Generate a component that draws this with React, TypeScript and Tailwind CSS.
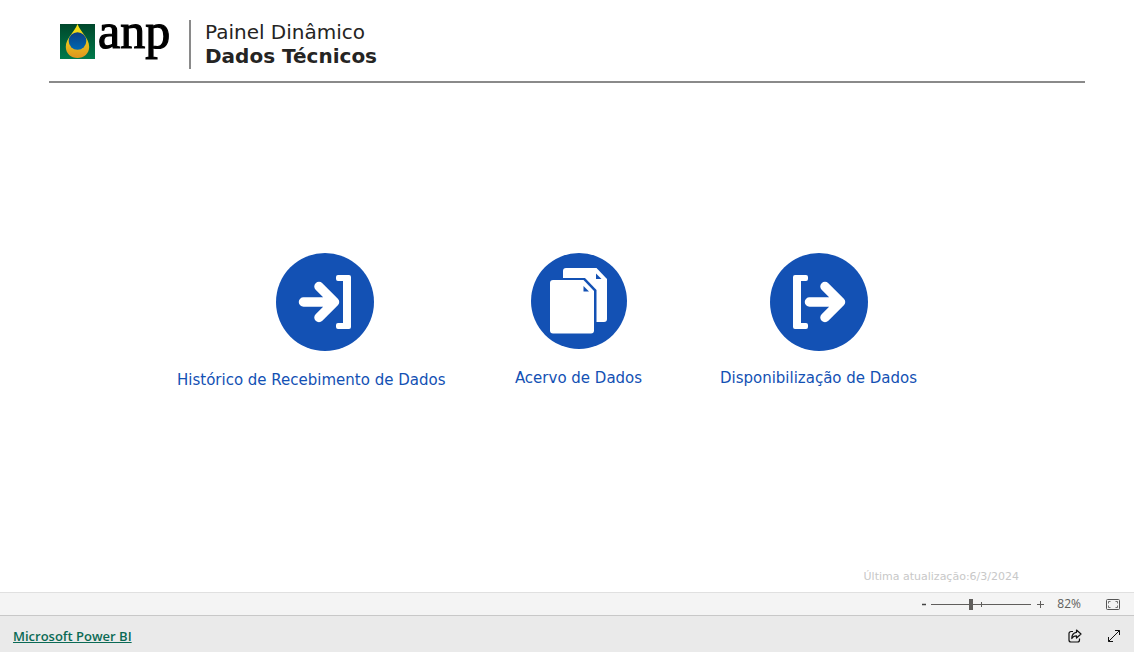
import React, { useState } from 'react';

interface NavItem {
  label: string;
  icon: React.ReactNode;
  labelClass?: string;
}

function AnpLogo() {
  return (
    <svg className="h-12 w-28 shrink-0 overflow-visible" viewBox="0 0 112 48" role="img" aria-label="anp">
      <defs>
        <linearGradient id="field" x1="0" y1="0" x2="0" y2="1">
          <stop offset="0" stopColor="#00472b" />
          <stop offset="1" stopColor="#007a4b" />
        </linearGradient>
        <linearGradient id="drop" x1="0" y1="0" x2="0" y2="1">
          <stop offset="0" stopColor="#f8e813" />
          <stop offset="0.5" stopColor="#e9c51d" />
          <stop offset="1" stopColor="#e0941f" />
        </linearGradient>
        <linearGradient id="globe" x1="0" y1="0" x2="0" y2="1">
          <stop offset="0" stopColor="#0d3f83" />
          <stop offset="1" stopColor="#0067b1" />
        </linearGradient>
      </defs>
      <rect x="0" y="4" width="35" height="35" fill="url(#field)" />
      <path d="M17.500 4C14.500 12 5.800 18 5.800 27c0 6.500 5.200 11 11.700 11s11.700-4.500 11.700-11C29.200 18 20.500 12 17.500 4z" fill="url(#drop)" />
      <circle cx="17.500" cy="21" r="8.800" fill="url(#globe)" />
      <text
        x="38"
        y="28"
        fontSize="50"
        fontFamily="Liberation Serif, serif"
        fill="#000"
        stroke="#000"
        strokeWidth="1.2"
      >
        anp
      </text>
    </svg>
  );
}

function ReceiveIcon() {
  return (
    <svg className="size-[98px]" viewBox="0 0 98 98" aria-hidden="true">
      <circle cx="49" cy="49" r="49" fill="#1351b4" />
      <path d="M27.500 49H57M43 33.500L58.500 49L43 64.500" fill="none" stroke="#fff" strokeWidth="9.500" strokeLinecap="round" strokeLinejoin="round" />
      <path d="M62 22h11a2 2 0 0 1 2 2v50a2 2 0 0 1-2 2H62a2 2 0 0 1-2-2v-2a2 2 0 0 1 2-2h5V28h-5a2 2 0 0 1-2-2v-2a2 2 0 0 1 2-2z" fill="#fff" />
    </svg>
  );
}

function CollectionIcon() {
  return (
    <svg className="size-24" viewBox="0 0 96 96" aria-hidden="true">
      <circle cx="48" cy="48" r="48" fill="#1351b4" />
      <path d="M35 15h30.500L76 26v40a3 3 0 0 1-3 3H35a3 3 0 0 1-3-3V18a3 3 0 0 1 3-3z" fill="#fff" />
      <path d="M65 20.500V26h5.500z" fill="#1351b4" />
      <path d="M18 25h36L65.500 37v47H18z" fill="#1351b4" />
      <path d="M22 27h30.500L63 38v39.500a3 3 0 0 1-3 3H22a3 3 0 0 1-3-3V30a3 3 0 0 1 3-3z" fill="#fff" />
      <path d="M52.500 33v5.500H58z" fill="#1351b4" />
    </svg>
  );
}

function ReleaseIcon() {
  return (
    <svg className="size-[98px]" viewBox="0 0 98 98" aria-hidden="true">
      <circle cx="49" cy="49" r="49" fill="#1351b4" />
      <path d="M39.500 49H70M55 33.500L70.500 49L55 64.500" fill="none" stroke="#fff" strokeWidth="9.500" strokeLinecap="round" strokeLinejoin="round" />
      <path d="M36 22H25a2 2 0 0 0-2 2v50a2 2 0 0 0 2 2h11a2 2 0 0 0 2-2v-2a2 2 0 0 0-2-2h-5V28h5a2 2 0 0 0 2-2v-2a2 2 0 0 0-2-2z" fill="#fff" />
    </svg>
  );
}

const navItems: NavItem[] = [
  { label: 'Histórico de Recebimento de Dados', icon: <ReceiveIcon />, labelClass: 'self-start pt-0.5' },
  { label: 'Acervo de Dados', icon: <CollectionIcon /> },
  { label: 'Disponibilização de Dados', icon: <ReleaseIcon /> },
];

function ZoomBar() {
  const [zoom, setZoom] = useState(82);

  return (
    <div className="flex h-6 items-center justify-end border-y border-t-[#e0e0e0] border-b-[#c8c8c8] bg-[#f4f4f4] pr-3.5 font-['Open_Sans',sans-serif] text-xs text-[#605e5c]">
      <button type="button" aria-label="Reduzir" onClick={() => setZoom(Math.max(10, zoom - 10))} className="flex w-3 justify-center">
        <svg className="size-2" viewBox="0 0 8 8" aria-hidden="true">
          <path d="M2 4.500h4" stroke="#444" strokeWidth="1.500" />
        </svg>
      </button>
      <div className="relative mx-px flex h-3 w-[100px] items-center bg-[linear-gradient(#605e5c,#605e5c)] bg-[length:100%_1px] bg-center bg-no-repeat">
        <span className="absolute left-1/2 h-[5px] w-px bg-[#605e5c]" />
        <input
          type="range"
          min={10}
          max={190}
          value={zoom}
          aria-label="Zoom"
          onChange={(e) => setZoom(Number(e.target.value))}
          className="relative h-3 w-full appearance-none bg-transparent [&::-webkit-slider-thumb]:h-[11px] [&::-webkit-slider-thumb]:w-1 [&::-webkit-slider-thumb]:appearance-none [&::-webkit-slider-thumb]:bg-[#605e5c]"
        />
      </div>
      <button type="button" aria-label="Ampliar" onClick={() => setZoom(Math.min(190, zoom + 10))} className="ml-0.5 flex w-3 justify-center">
        <svg className="size-[9px]" viewBox="0 0 9 9" aria-hidden="true">
          <path d="M1 4.500h7M4.500 1v7" stroke="#605e5c" />
        </svg>
      </button>
      <span className="w-9 pr-px text-right">{zoom}%</span>
      <button type="button" aria-label="Ajustar à página" className="ml-6">
        <svg className="h-[11px] w-3.5" viewBox="0 0 14 11" fill="none" stroke="#555" aria-hidden="true">
          <rect x="0.500" y="0.500" width="13" height="10" rx="1" />
          <path d="M2.500 4.500v-2h2M9.500 2.500h2v2M11.500 6.500v2h-2M4.500 8.500h-2v-2" strokeWidth="0.8" />
        </svg>
      </button>
    </div>
  );
}

export default function App() {
  return (
    <div className="flex min-h-screen flex-col bg-white font-['DejaVu_Sans',sans-serif] text-[#252423]">
      <header className="mx-[49px] flex h-[83px] shrink-0 items-start border-b-2 border-[#8a8a8a] pt-5 pl-[11px]">
        <AnpLogo />
        <div className="ml-[17px] border-l-2 border-[#8a8a8a] pb-px pl-3.5">
          <h1 className="text-xl leading-6">
            <span className="block">Painel Dinâmico</span>
            <strong className="block">Dados Técnicos</strong>
          </h1>
        </div>
      </header>

      <main className="flex flex-1 flex-col justify-between">
        <nav className="mx-auto mt-[170px] grid w-full max-w-[780px] grid-cols-[296px_211px_269px]">
          {navItems.map((item) => (
            <a key={item.label} href="#" className="flex flex-col items-center text-[#1351b4]">
              <span className="h-[98px]">{item.icon}</span>
              <span className={`mt-[17px] text-[15px] leading-5 whitespace-nowrap ${item.labelClass ?? ''}`}>{item.label}</span>
            </a>
          ))}
        </nav>
        <p className="mr-[115px] mb-[7px] text-right text-[11px] leading-4 text-[#c8c8c8]">Última atualização:6/3/2024</p>
      </main>

      <ZoomBar />

      <footer className="flex h-9 shrink-0 items-center justify-between bg-[#eaeaea] pt-[3px] pr-3.5 pl-[13px]">
        <a href="#" className="font-['Open_Sans',sans-serif] text-[13px] leading-5 font-semibold text-[#0b6a55] underline">
          Microsoft Power BI
        </a>
        <div className="flex items-center gap-[26px]">
          <button type="button" aria-label="Compartilhar">
            <svg className="size-3.5" viewBox="0 0 14 14" fill="none" stroke="#111" strokeLinejoin="round" aria-hidden="true">
              <path d="M5 2.500H3a2 2 0 0 0-2 2V11a2 2 0 0 0 2 2h6.500a2 2 0 0 0 2-2V9.500" strokeWidth="1.200" />
              <path d="M8.500 1l4.500 4-4.500 4V6.800C6 6.800 4.800 7.600 3.800 9.500c0-3.500 1.700-5.800 4.700-6.200z" strokeWidth="1.200" />
            </svg>
          </button>
          <button type="button" aria-label="Tela cheia">
            <svg className="size-3" viewBox="0 0 12 12" fill="none" stroke="#111" aria-hidden="true">
              <path d="M0.500 11.500l11-11M7 0.500h4.500V5M0.500 7v4.500H5" />
            </svg>
          </button>
        </div>
      </footer>
    </div>
  );
}
